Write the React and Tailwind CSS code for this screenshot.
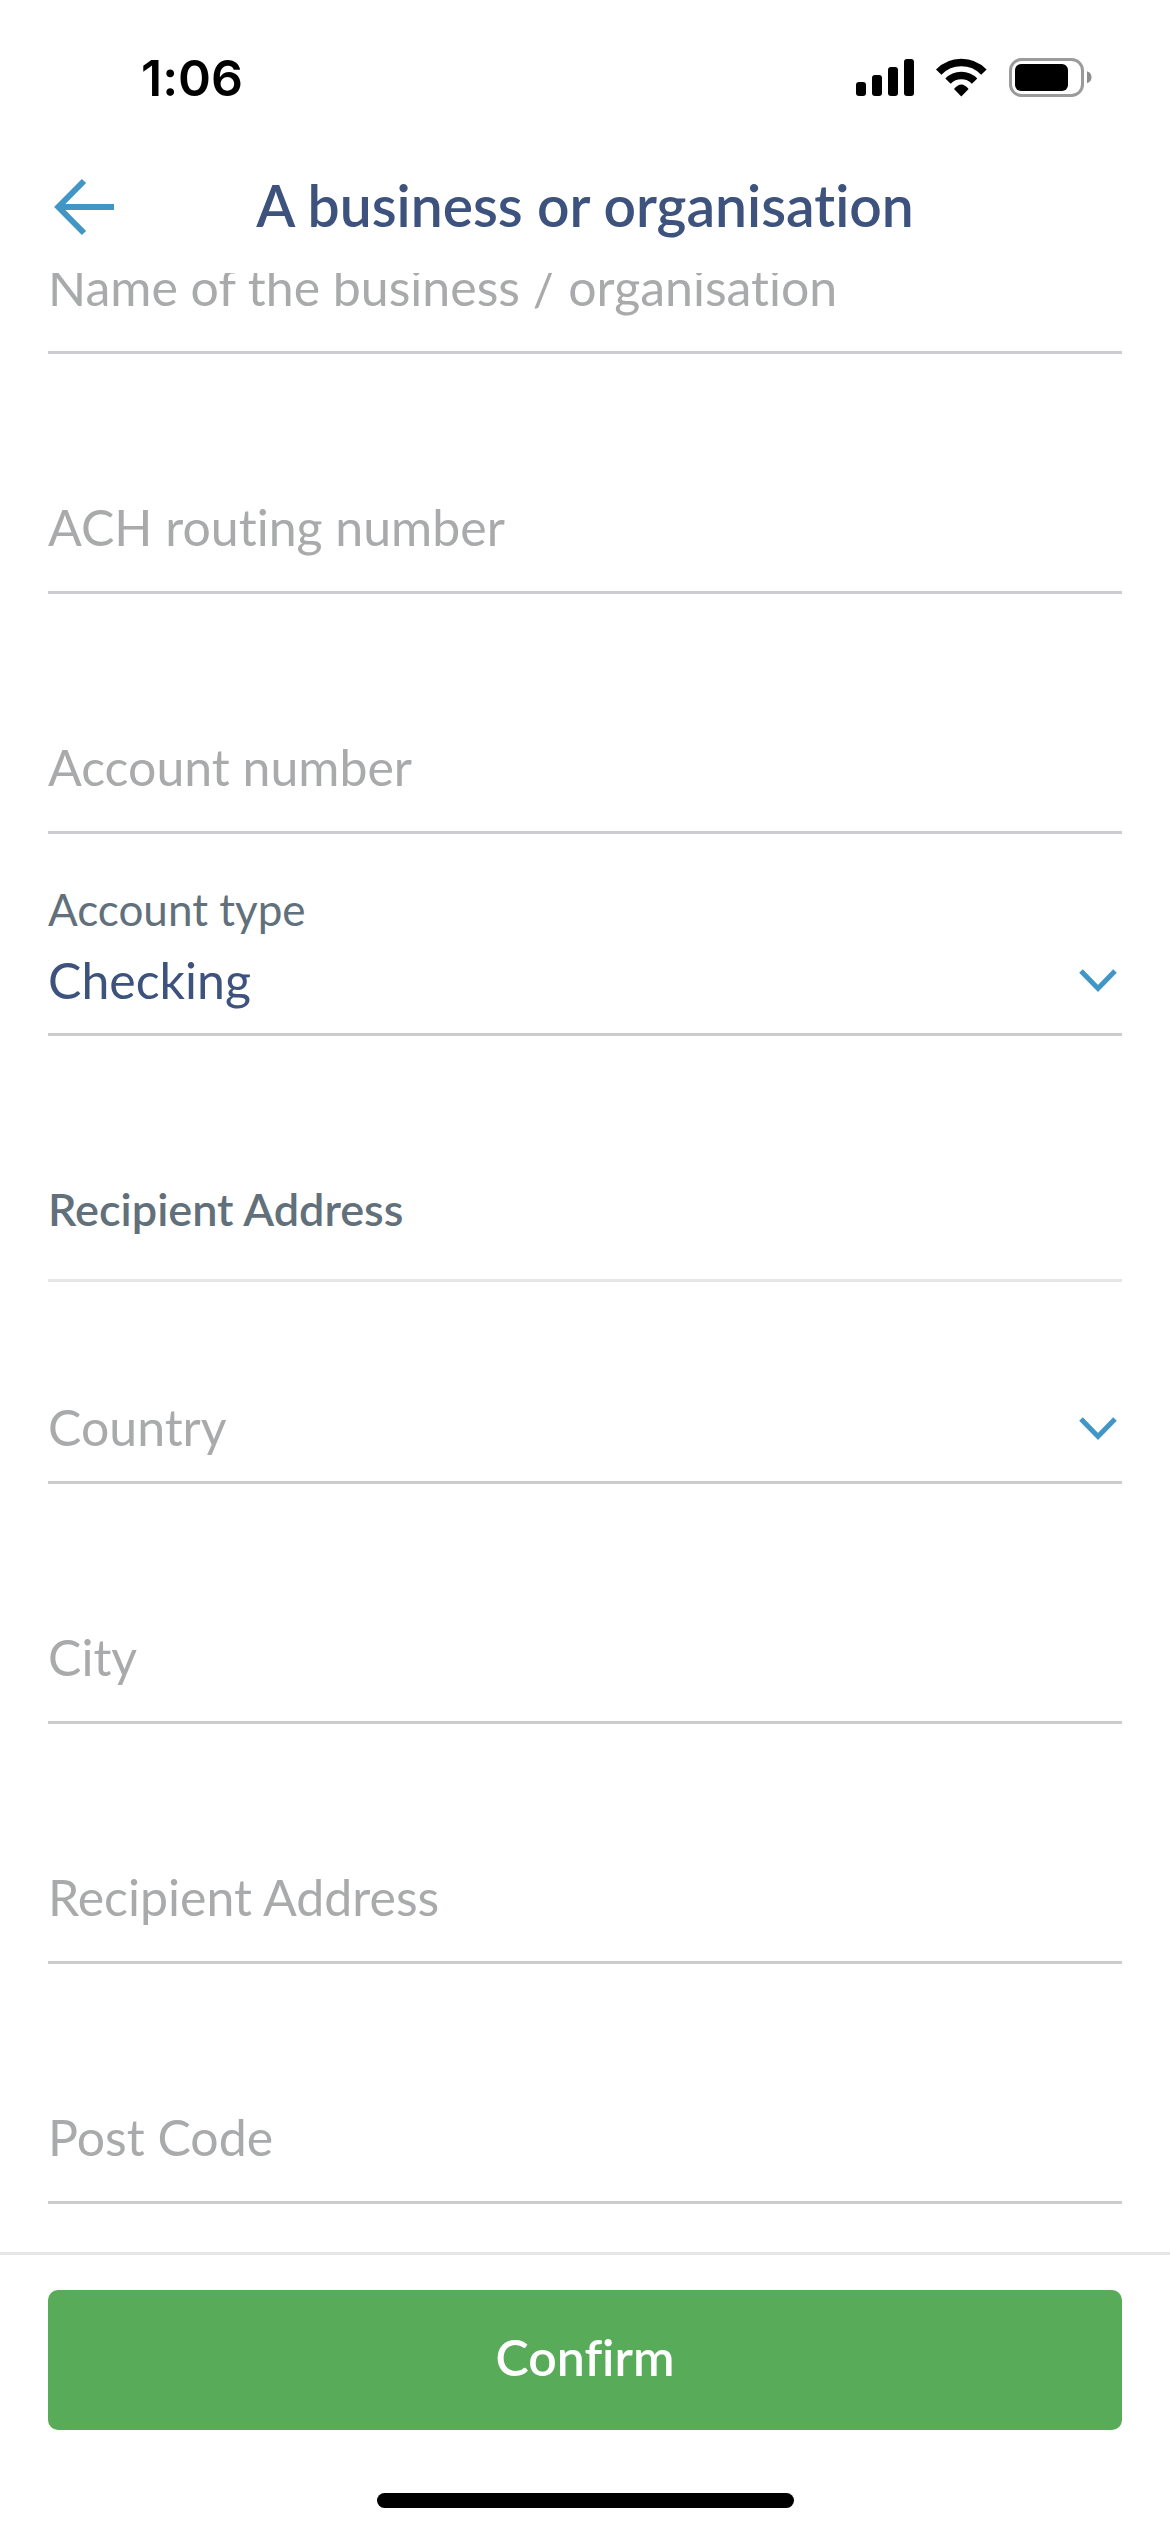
import { useState } from 'react';

function StatusIcons() {
  return (
    <svg className="h-[42px] w-[236px]" viewBox="856 57 236 42" role="img" aria-label="Signal, Wi-Fi and battery">
      <rect x="856" y="82" width="10" height="14" rx="3" />
      <rect x="872" y="75" width="10" height="21" rx="3" />
      <rect x="888" y="67" width="10" height="29" rx="3" />
      <rect x="904" y="59" width="10" height="37" rx="3" />
      <g fill="none" stroke="#000" strokeWidth="7.5">
        <path d="M938.7 72.2A31.4 31.4 0 0 1 983.9 72.2" />
        <path d="M948 81.2A18.5 18.5 0 0 1 974.6 81.2" />
      </g>
      <path d="M954 89Q961.3 80 968.6 89L961.3 96.5Z" />
      <rect x="1010.5" y="59.5" width="72" height="36" rx="11" fill="none" stroke="#9b9b9b" strokeWidth="3" />
      <rect x="1015" y="64" width="53" height="27" rx="6" />
      <path d="M1087 71.3Q1091.5 73 1091.5 77.3Q1091.5 81.600 1087 83.3Z" fill="#8e8e8e" />
    </svg>
  );
}

/* The label fills the empty input and gives way once something is typed. */
function TextField({ id, label }) {
  return (
    <div className="grid border-b-3 border-[#cbcbd0] pt-[137px] pb-[28px]">
      <input
        id={id}
        type="text"
        placeholder=" "
        className="peer col-start-1 row-start-1 h-[72px] w-full bg-transparent text-[50px] text-[#3d527d] outline-none"
      />
      <label
        htmlFor={id}
        className="pointer-events-none invisible col-start-1 row-start-1 text-[50px] leading-[72px] text-[#a9aaab] peer-placeholder-shown:visible"
      >
        {label}
      </label>
    </div>
  );
}

function SelectBox({ id, value, onChange, options, label }) {
  return (
    <div className="grid items-center">
      <select
        id={id}
        value={value}
        onChange={(e) => onChange(e.target.value)}
        className="col-start-1 row-start-1 h-[72px] w-full appearance-none bg-transparent text-[50px] text-[#3d527d] outline-none"
      >
        {label && <option value="" disabled />}
        {options.map((o) => <option key={o} value={o}>{o}</option>)}
      </select>
      {label && (
        <label
          htmlFor={id}
          className={`pointer-events-none col-start-1 row-start-1 text-[50px] leading-[72px] text-[#a9aaab] ${value ? 'invisible' : 'visible'}`}
        >
          {label}
        </label>
      )}
      <svg className="pointer-events-none col-start-1 row-start-1 mr-1 h-7 w-10 justify-self-end" viewBox="0 0 40 28" fill="none" stroke="#4196c5" strokeWidth="5" aria-hidden="true">
        <path d="M3 6L20 23.500L37 6" />
      </svg>
    </div>
  );
}

export default function App() {
  const [type, setType] = useState('Checking');
  const [country, setCountry] = useState('');
  return (
    <div className="flex min-h-screen flex-col bg-white font-['Lato',sans-serif] [font-variant-ligatures:none]">
      <header className="bg-white">
        <div className="flex h-[141px] items-center justify-between pt-[15px] pr-[78px] pl-[141px]">
          <span className="font-['Inter',sans-serif] text-[50px] font-semibold text-black">1:06</span>
          <StatusIcons />
        </div>
        <div className="grid h-[132px] grid-cols-[1fr_auto_1fr] items-center px-12">
          <button type="button" aria-label="Back" className="justify-self-start">
            <svg className="h-[60px] w-[68px]" viewBox="48 177 68 60" fill="none" stroke="#4196c5" strokeWidth="6">
              <path d="M84 181L58.3 207L84 233M58.3 207H114" />
            </svg>
          </button>
          <h1 className="pb-1 text-[57px] leading-[68px] font-semibold text-[#3d527d]">A business or organisation</h1>
        </div>
      </header>

      <main className="flex-1 overflow-hidden px-12 pb-12">
        <form id="recipient" className="-mt-[159px]" onSubmit={(e) => e.preventDefault()}>
          <TextField id="name" label="Name of the business / organisation" />
          <TextField id="routing" label="ACH routing number" />
          <TextField id="account" label="Account number" />
          <div className="border-b-3 border-[#cbcbd0] pt-[49px] pb-[18px]">
            <label htmlFor="type" className="mb-2 block text-[44px] leading-[52px] text-[#61707a]">Account type</label>
            <SelectBox id="type" value={type} onChange={setType} options={['Checking', 'Savings']} />
          </div>
          <h2 className="border-b-3 border-[#e6e6e6] pt-[147px] pb-11 text-[45px] leading-[52px] font-semibold text-[#61707a]">
            Recipient Address
          </h2>
          <div className="border-b-3 border-[#cbcbd0] pt-[109px] pb-[18px]">
            <SelectBox id="country" value={country} onChange={setCountry} label="Country" options={['United Kingdom', 'United States']} />
          </div>
          <TextField id="city" label="City" />
          <TextField id="address" label="Recipient Address" />
          <TextField id="postcode" label="Post Code" />
        </form>
      </main>

      <footer className="border-t-3 border-[#e6e6e6] bg-white px-12 pt-[35px] pb-6">
        <button type="submit" form="recipient" className="block h-[140px] w-full rounded-[10px] bg-[#58ab58] pb-1.5 text-[50px] font-semibold text-white">
          Confirm
        </button>
        <div className="mx-auto mt-[63px] h-[15px] w-[417px] rounded-full bg-black" />
      </footer>
    </div>
  );
}
